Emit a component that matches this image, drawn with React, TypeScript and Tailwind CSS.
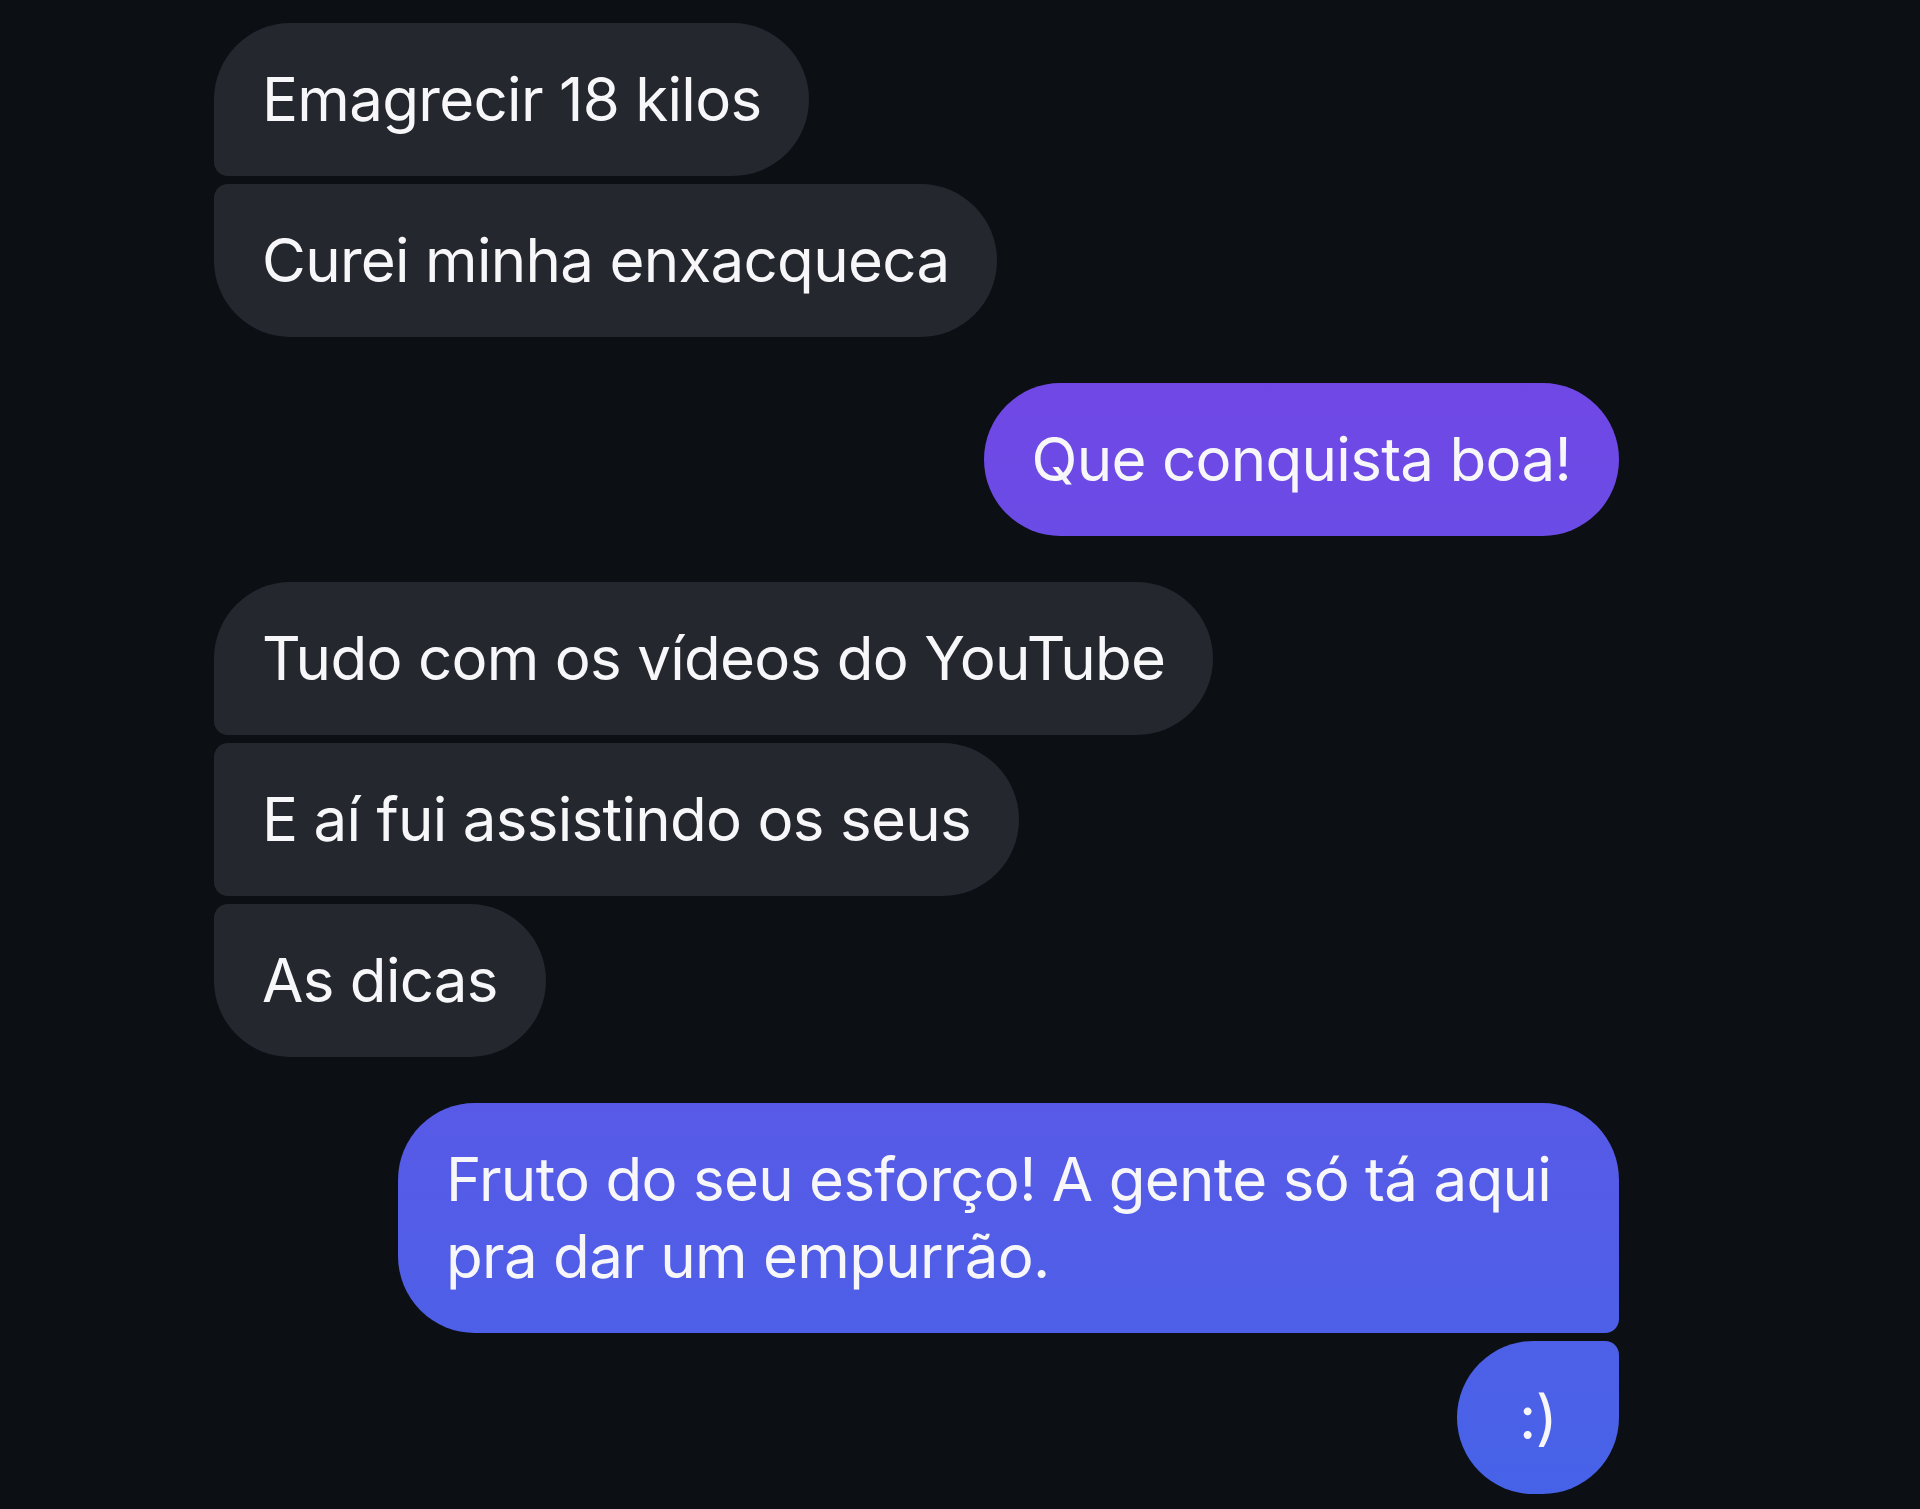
import React from 'react';

type Msg = {
  text: string;
  mine?: boolean;
  shape: string;
  extra?: string;
};

const groups: Msg[][] = [
  [
    { text: 'Emagrecir 18 kilos', shape: 'rounded-[77px] rounded-bl-[14px]' },
    { text: 'Curei minha enxacqueca', shape: 'rounded-[77px] rounded-tl-[14px]' },
  ],
  [{ text: 'Que conquista boa!', mine: true, shape: 'rounded-[77px]' }],
  [
    { text: 'Tudo com os vídeos do YouTube', shape: 'rounded-[77px] rounded-bl-[14px]' },
    { text: 'E aí fui assistindo os seus', shape: 'rounded-[77px] rounded-l-[14px]' },
    { text: 'As dicas', shape: 'rounded-[77px] rounded-tl-[14px]' },
  ],
  [
    {
      text: 'Fruto do seu esforço! A gente só tá aqui\npra dar um empurrão.',
      mine: true,
      shape: 'rounded-[77px] rounded-br-[14px]',
      extra: 'w-[1221px] whitespace-pre-line',
    },
    { text: ':)', mine: true, shape: 'rounded-[77px] rounded-tr-[14px]', extra: 'w-[162px] text-center px-0' },
  ],
];

const Bubble: React.FC<{ msg: Msg }> = ({ msg }) => (
  <div
    className={`px-[48px] py-[38px] text-[60px] leading-[77px] tracking-[-0.7px] text-[#f7f7fa] ${msg.shape} ${
      msg.mine
        ? 'self-end bg-fixed bg-linear-to-b from-[#7a3be4] to-[#4563e8]'
        : 'self-start bg-[#24272d]'
    } ${msg.extra ?? ''}`}
  >
    {msg.text}
  </div>
);

export default function App() {
  return (
    <div
      className="min-h-[1509px] w-full bg-[#0c0f14] pl-[214px] pr-[301px] pt-[23px]"
      style={{ fontFamily: 'Inter, "Noto Sans", sans-serif' }}
    >
      <div className="flex flex-col gap-[46px]">
        {groups.map((group, gi) => (
          <div key={gi} className="flex flex-col gap-[8px]">
            {group.map((msg, mi) => (
              <Bubble key={mi} msg={msg} />
            ))}
          </div>
        ))}
      </div>
    </div>
  );
}
